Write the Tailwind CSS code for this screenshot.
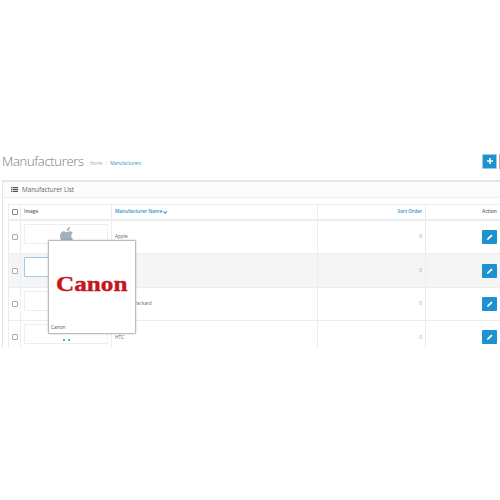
<!DOCTYPE html>
<html>
<head>
<meta charset="utf-8">
<script src="https://cdn.jsdelivr.net/npm/@tailwindcss/browser@4"></script>
</head>
<body class="bg-white">
<div class="relative w-[500px] h-[500px] overflow-hidden pt-[150px] font-['Open_Sans',sans-serif] text-[#666]">

  <!-- Page header -->
  <div class="flex items-center h-[22px] pl-[2px]">
    <h1 class="text-[13px] leading-[18px] text-[#777] tracking-[-0.3px] font-light">Manufacturers</h1>
    <div class="flex items-center ml-[6px] mt-[5px] text-[4.5px] gap-[3px]">
      <span class="text-[#aaa]">Home</span>
      <span class="text-[#ccc]">/</span>
      <span class="text-[#1e91cf]">Manufacturers</span>
    </div>
    <div class="flex ml-auto gap-[2px] shrink-0 -mr-[1px]">
      <button class="w-[15px] h-[15px] bg-[#1e91cf] border border-[#9ccbe6] rounded-[1px] flex items-center justify-center">
        <svg class="w-[6px] h-[6px]" viewBox="0 0 6 6"><path d="M2.200 0h1.600v2.200H6v1.600H3.800V6H2.200V3.800H0V2.200h2.200z" fill="#fff"/></svg>
      </button>
      <div class="w-[2px] h-[15px] bg-[#e39a94]"></div>
    </div>
  </div>

  <!-- Panel -->
  <div class="mt-[8px] ml-[2px] w-[520px] border-t-2 border-l border-[#e5e5e5]">
    <div class="flex items-center h-[16px] bg-[#fcfcfc] border-b border-[#eee] pl-[8px] gap-[4px] text-[6.3px] text-[#666]">
      <svg class="w-[7px] h-[5px]" viewBox="0 0 7 5" fill="#555"><path d="M0 0h1.500v1.200H0zM2 0h5v1.200H2zM0 1.900h1.500v1.200H0zM2 1.900h5v1.200H2zM0 3.800h1.500V5H0zM2 3.800h5V5H2z"/></svg>
      <span>Manufacturer List</span>
    </div>

    <div class="pl-[5px] pt-[6px]">
      <div class="h-[144px] overflow-hidden">
        <table class="w-[515px] table-fixed border-collapse text-[4.8px] text-[#666]">
          <colgroup>
            <col class="w-[12px]"><col class="w-[91px]"><col class="w-[206px]"><col class="w-[108px]"><col class="w-[98px]">
          </colgroup>
          <thead>
            <tr class="h-[15px] border-t border-b-2 border-[#eaeef1]">
              <td class="border-r border-[#eaeef1] border-l"><div class="w-[6px] h-[6px] mx-auto border border-[#888] rounded-[1px] bg-white"></div></td>
              <td class="border-r border-[#eaeef1] pl-[3px] font-semibold text-[#666]">Image</td>
              <td class="border-r border-[#eaeef1] pl-[3px] font-semibold text-[#1e91cf]">Manufacturer Name <span class="inline-block w-[2.5px] h-[2.5px] border-r border-b border-[#1e91cf] rotate-45 -translate-y-[1px] ml-[1px]"></span></td>
              <td class="border-r border-[#eaeef1] pr-[3px] text-right font-semibold text-[#1e91cf]">Sort Order</td>
              <td class="pl-[56px] font-semibold text-[#666]">Action</td>
            </tr>
          </thead>
          <tbody>
            <tr class="h-[34px] border-b border-[#eaeef1]">
              <td class="border-x border-[#eaeef1]"><div class="w-[6px] h-[6px] mx-auto border border-[#aaa] rounded-[1px]"></div></td>
              <td class="border-r border-[#eaeef1] pl-[3px] pt-[3px] align-top">
                <div class="w-[84px] h-[20px] border border-[#eee] rounded-[1px] flex justify-center">
                  <svg class="w-[13px] h-[16px] mt-[2px] shrink-0" viewBox="0 0 13 16"><path d="M6.500 4.300C6.800 1.700 8.200.3 10 0c.2 2-1.300 3.900-3.500 4.300zM6.500 5c1.200 0 1.900-.8 3.500-.8 1.100 0 2.200.6 2.800 1.700-2.300 1.300-2 4.600.2 5.600-.8 2.200-2.200 4.200-3.500 4.200-1 0-1.500-.6-2.700-.6s-1.800.6-2.800.6C2 15.700 0 11.900 0 9c0-3 1.900-4.800 3.700-4.800 1.200 0 2 .8 2.800.8z" fill="#a3b0bd"/></svg>
                </div>
              </td>
              <td class="border-r border-[#eaeef1] pl-[3px]">Apple</td>
              <td class="border-r border-[#eaeef1] pr-[3px] text-right text-[#999]">0</td>
              <td class="pl-[56px]"><button class="w-[15px] h-[14px] bg-[#1e91cf] rounded-[1px] flex items-center justify-center"><svg class="w-[6px] h-[6px]" viewBox="0 0 6 6"><path d="M0 6l.4-1.700L4.300.4l1.300 1.300L1.700 5.600z" fill="#fff"/></svg></button></td>
            </tr>
            <tr class="h-[34px] border-b border-[#eaeef1] bg-[#f5f5f5]">
              <td class="border-x border-[#eaeef1]"><div class="w-[6px] h-[6px] mx-auto border border-[#aaa] rounded-[1px] bg-white"></div></td>
              <td class="border-r border-[#eaeef1] pl-[3px] pt-[3px] align-top"><div class="w-[84px] h-[20px] border border-[#9ccbe6] rounded-[1px] bg-white"></div></td>
              <td class="border-r border-[#eaeef1] pl-[3px]"></td>
              <td class="border-r border-[#eaeef1] pr-[3px] text-right text-[#999]">0</td>
              <td class="pl-[56px]"><button class="w-[15px] h-[14px] bg-[#1e91cf] rounded-[1px] flex items-center justify-center"><svg class="w-[6px] h-[6px]" viewBox="0 0 6 6"><path d="M0 6l.4-1.700L4.300.4l1.300 1.300L1.700 5.600z" fill="#fff"/></svg></button></td>
            </tr>
            <tr class="h-[33px] border-b border-[#eaeef1]">
              <td class="border-x border-[#eaeef1]"><div class="w-[6px] h-[6px] mx-auto border border-[#aaa] rounded-[1px]"></div></td>
              <td class="border-r border-[#eaeef1] pl-[3px] pt-[3px] align-top"><div class="w-[84px] h-[20px] border border-[#eee] rounded-[1px]"></div></td>
              <td class="border-r border-[#eaeef1] pl-[3px]">Hewlett-Packard</td>
              <td class="border-r border-[#eaeef1] pr-[3px] text-right text-[#999]">0</td>
              <td class="pl-[56px]"><button class="w-[15px] h-[14px] bg-[#1e91cf] rounded-[1px] flex items-center justify-center"><svg class="w-[6px] h-[6px]" viewBox="0 0 6 6"><path d="M0 6l.4-1.700L4.300.4l1.300 1.300L1.700 5.600z" fill="#fff"/></svg></button></td>
            </tr>
            <tr class="h-[33px]">
              <td class="border-x border-[#eaeef1]"><div class="w-[6px] h-[6px] mx-auto border border-[#aaa] rounded-[1px]"></div></td>
              <td class="border-r border-[#eaeef1] pl-[3px] pt-[3px] align-top">
                <div class="w-[84px] h-[20px] border border-[#eee] rounded-[1px] flex justify-center gap-[3px] pt-[14px]">
                  <span class="w-[2px] h-[2px] bg-[#3fb4c6]"></span><span class="w-[2px] h-[2px] bg-[#3fb4c6]"></span>
                </div>
              </td>
              <td class="border-r border-[#eaeef1] pl-[3px]">HTC</td>
              <td class="border-r border-[#eaeef1] pr-[3px] text-right text-[#999]">0</td>
              <td class="pl-[56px]"><button class="w-[15px] h-[14px] bg-[#1e91cf] rounded-[1px] flex items-center justify-center"><svg class="w-[6px] h-[6px]" viewBox="0 0 6 6"><path d="M0 6l.4-1.700L4.300.4l1.300 1.300L1.700 5.600z" fill="#fff"/></svg></button></td>
            </tr>
          </tbody>
        </table>
      </div>
    </div>
  </div>

  <!-- Hover preview -->
  <div class="absolute left-[48px] top-[240px] w-[88px] h-[94px] bg-white border border-[#bbb] rounded-[1px] shadow-[0_0_2px_rgba(0,0,0,0.25)] flex flex-col">
    <div class="flex-1 flex items-center justify-center pt-[3px]">
      <span class="font-['Liberation_Serif',serif] font-bold text-[#c4161c] text-[21px] leading-none scale-x-[1.2] [-webkit-text-stroke:0.4px_#c4161c]">Canon</span>
    </div>
    <div class="text-[4.8px] text-[#555] pl-[2px] pb-[2px] leading-[7px]">Canon</div>
  </div>
</div>
</body>
</html>
